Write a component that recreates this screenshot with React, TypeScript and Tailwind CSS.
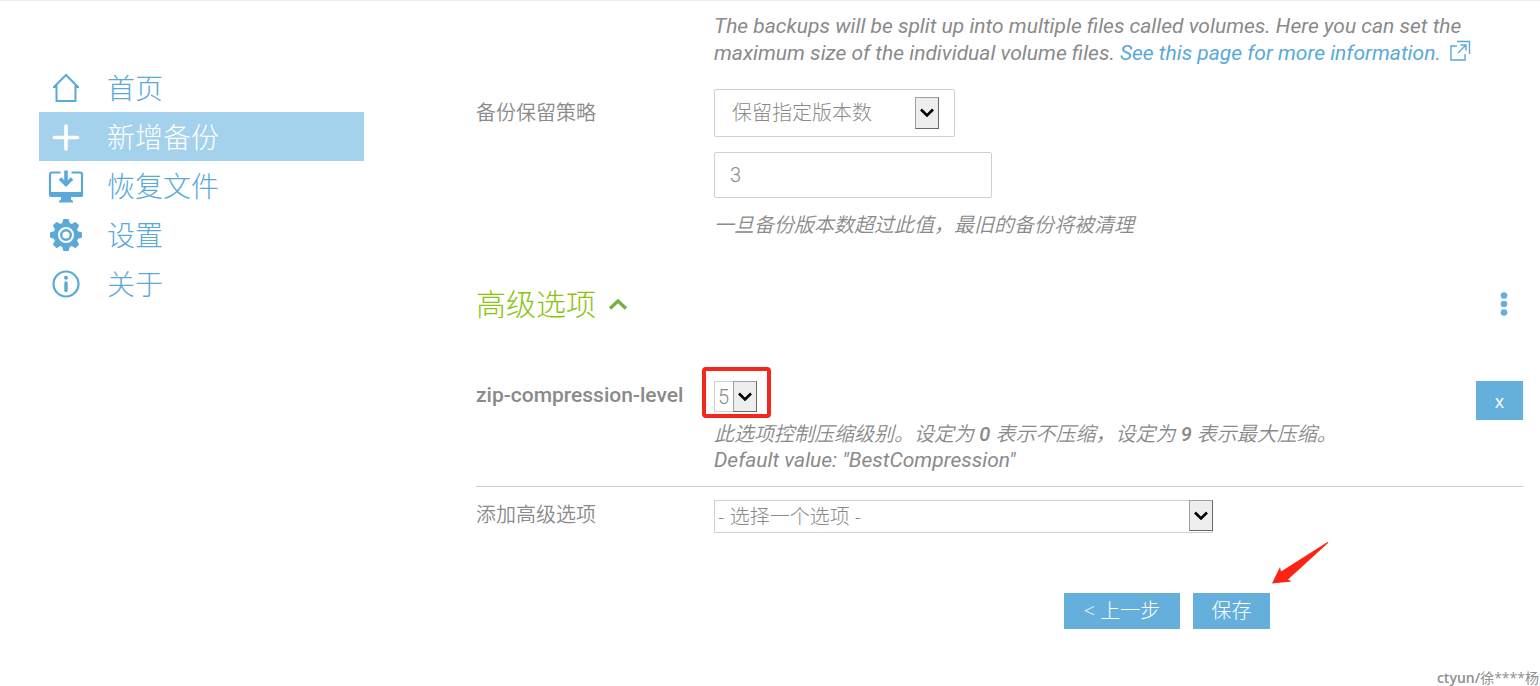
import { useState } from 'react'
import type { ReactNode, SelectHTMLAttributes } from 'react'
import clsx from 'clsx'

interface NavItem {
  label: string
  icon: ReactNode
}

const HomeIcon = () => (
  <svg viewBox="0 0 36 36" className="size-9" fill="none" stroke="currentColor" strokeWidth="2">
    <path d="M5.500 17.500 18 5l12.500 12.500" />
    <path d="M8.500 15v16h19V15" />
    <path d="M5 17h4M27 17h4" />
  </svg>
)

const PlusIcon = () => (
  <svg viewBox="0 0 36 36" className="size-9" fill="none" stroke="currentColor" strokeWidth="3.600" strokeLinecap="round">
    <path d="M18 7v23M6.500 18.500h23" />
  </svg>
)

const RestoreIcon = () => (
  <svg viewBox="0 0 36 36" className="size-9" fill="none" stroke="currentColor">
    <path strokeWidth="2.200" d="M12.500 4.500H4q-2 0-2 2v19.500h32V6.500q0-2-2-2h-8.500" />
    <path fill="currentColor" stroke="none" d="M1 24h34v3.500q0 1.500-1.500 1.500H23v2.500l2 1.500v1.500H11V33l2-1.500V29H2.500Q1 29 1 27.500z" />
    <path strokeWidth="3.600" d="M18 2.500v13" />
    <path strokeWidth="3.600" d="m12 10.500 6 6 6-6" />
  </svg>
)

const teeth = [0, 45, 90, 135, 180, 225, 270, 315]

const GearIcon = () => (
  <svg viewBox="0 0 36 36" className="size-9">
    <g fill="currentColor">
      {teeth.map(angle => (
        <path key={angle} d="m14 7 1.200-4.500q.2-.5.8-.5h4q.6 0 .8.500L22 7z" transform={`rotate(${angle} 18 18)`} />
      ))}
      <circle cx="18" cy="18" r="12.500" />
    </g>
    <circle cx="18" cy="18" r="7" fill="none" stroke="white" strokeWidth="2" />
    <circle cx="18" cy="18" r="3.600" fill="white" />
  </svg>
)

const InfoIcon = () => (
  <svg viewBox="0 0 36 36" className="size-9" fill="none" stroke="currentColor">
    <circle cx="18" cy="18" r="12.500" strokeWidth="2.200" />
    <path strokeWidth="3.400" strokeLinecap="round" d="M18 17v7.500" />
    <circle cx="18" cy="11.800" r="2" fill="currentColor" stroke="none" />
  </svg>
)

const navItems: NavItem[] = [
  { label: '首页', icon: <HomeIcon /> },
  { label: '新增备份', icon: <PlusIcon /> },
  { label: '恢复文件', icon: <RestoreIcon /> },
  { label: '设置', icon: <GearIcon /> },
  { label: '关于', icon: <InfoIcon /> },
]

interface SelectProps extends SelectHTMLAttributes<HTMLSelectElement> {
  wrapClass?: string
  arrowClass?: string
}

function Select({ wrapClass, arrowClass, className, children, ...rest }: SelectProps) {
  return (
    <div className={clsx('relative', wrapClass)}>
      <select
        {...rest}
        className={clsx('block w-full appearance-none border border-[#d0d0d0] bg-white font-light outline-none', className)}
      >
        {children}
      </select>
      <span
        className={clsx(
          'pointer-events-none absolute flex w-6 items-center justify-center border border-[#a0a0a0] border-r-[#696969] border-b-[#696969] bg-[#eeeeee]',
          arrowClass
        )}
      >
        <svg viewBox="0 0 14 10" className="h-[10px] w-[14px]" fill="none" stroke="black" strokeWidth="2.600">
          <path d="m1 1.500 6 6 6-6" />
        </svg>
      </span>
    </div>
  )
}

export default function App() {
  const [active, setActive] = useState('新增备份')
  const [retention, setRetention] = useState('versions')
  const [keep, setKeep] = useState('3')
  const [level, setLevel] = useState('5')
  const [showAdvanced, setShowAdvanced] = useState(true)

  return (
    <div className="relative flex min-h-screen items-start gap-28 border-t border-[#ececec] bg-white pr-[17px] pl-[39px] font-['Open_Sans','Noto_Sans_CJK_SC',sans-serif] text-xl leading-[26px] text-[#8a8a8a]">

      {/* Sidebar */}
      <nav className="w-[325px] shrink-0 pt-[62px]">
        {navItems.map(item => (
          <a
            key={item.label}
            href="#"
            onClick={() => setActive(item.label)}
            className={clsx(
              'flex h-[49px] items-center gap-[23px] pl-[9px] text-[28px] font-light',
              active === item.label ? 'bg-[#a4d1ec] text-white' : 'text-[#5aa9d8]'
            )}
          >
            {item.icon}
            <span>{item.label}</span>
          </a>
        ))}
      </nav>

      {/* Backup options */}
      <main className="min-w-0 flex-1 pt-3">
        <p className="pr-8 pl-[238px] font-['Roboto',sans-serif] text-[21px] leading-[27px] italic">
          The backups will be split up into multiple files called volumes. Here you can set the
          maximum size of the individual volume files.{' '}
          <a href="#" className="text-[#5aa9d8]">
            See this page for more information.
            <svg viewBox="0 0 22 22" className="ml-2 inline size-[22px] align-[-2px]" fill="none" stroke="currentColor" strokeWidth="1.400">
              <path d="M8 6H2v14h14v-6M8 1.500h12.500V14M9 13l8-8M11.500 5H17v5.500" />
            </svg>
          </a>
        </p>

        <div className="mt-[22px] flex items-start">
          <label htmlFor="retention" className="w-[238px] shrink-0 leading-[48px] font-[350]">备份保留策略</label>
          <div>
            <Select
              id="retention"
              value={retention}
              onChange={e => setRetention(e.target.value)}
              wrapClass="w-[241px]"
              className="h-12 rounded-xs px-[17px]"
              arrowClass="top-2 right-4 h-8"
            >
              <option value="versions">保留指定版本数</option>
              <option value="all">保留所有备份</option>
            </Select>
            <input
              aria-label="备份版本数"
              value={keep}
              onChange={e => setKeep(e.target.value)}
              className="mt-[15px] block h-[46px] w-[278px] rounded-xs border border-[#d0d0d0] px-[15px] font-['Roboto',sans-serif] font-light outline-none"
            />
            <p className="mt-[14px] font-[350] italic">一旦备份版本数超过此值，最旧的备份将被清理</p>
          </div>
        </div>

        <div className="mt-[46px] flex h-10 items-center justify-between">
          <h2>
            <button
              onClick={() => setShowAdvanced(!showAdvanced)}
              className="flex items-center gap-3 text-3xl font-light text-[#8ac40f]"
            >
              高级选项
              <svg
                viewBox="0 0 20 12"
                className={clsx('h-3 w-5', !showAdvanced && 'rotate-180')}
                fill="none"
                stroke="#76b043"
                strokeWidth="3.400"
              >
                <path d="m2 10.500 8-7.500 8 7.500" />
              </svg>
            </button>
          </h2>
          <button aria-label="菜单" className="mr-[15px] text-[#65afdc]">
            <svg viewBox="0 0 8 24" className="h-6 w-2" fill="currentColor">
              <circle cx="4" cy="3.500" r="3.300" />
              <circle cx="4" cy="12" r="3.300" />
              <circle cx="4" cy="20.500" r="3.300" />
            </svg>
          </button>
        </div>

        {showAdvanced && (
          <>
            <div className="mt-[57px] flex items-start border-b border-[#cccccc] pb-[13px]">
              <label htmlFor="level" className="w-[238px] shrink-0 font-['Roboto',sans-serif] text-[21px] leading-7 font-medium">zip-compression-level</label>
              <div className="min-w-0 flex-1">
                <div className="relative w-[43px]">
                  <Select
                    id="level"
                    value={level}
                    onChange={e => setLevel(e.target.value)}
                    className="h-[31px] pl-[3px] font-['Roboto',sans-serif]"
                    arrowClass="top-0 right-0 h-[31px]"
                  >
                    {['0', '1', '2', '3', '4', '5', '6', '7', '8', '9'].map(n => (
                      <option key={n}>{n}</option>
                    ))}
                  </Select>
                  <span className="pointer-events-none absolute -top-[14px] -right-[14px] -bottom-[6px] -left-3 rounded-sm border-4 border-[#f5261b]" />
                </div>
                <p className="mt-[9px] font-[350] italic">
                  此选项控制压缩级别。设定为 <span className="font-['Roboto',sans-serif] font-medium">0</span> 表示不压缩，设定为 <span className="font-['Roboto',sans-serif] font-medium">9</span> 表示最大压缩。
                </p>
                <p className="font-['Roboto',sans-serif] text-[21px] italic">Default value: "BestCompression"</p>
              </div>
              <button className="h-[39px] w-[47px] shrink-0 bg-[#65afdc] text-lg text-white">x</button>
            </div>

            <div className="mt-[13px] flex items-start">
              <label htmlFor="add-option" className="w-[238px] shrink-0 leading-[29px] font-[350]">添加高级选项</label>
              <Select
                id="add-option"
                wrapClass="w-[499px]"
                className="h-[33px] pl-[3px]"
                arrowClass="top-0 right-0 h-[31px]"
              >
                <option>- 选择一个选项 -</option>
              </Select>
            </div>
          </>
        )}

        {/* Step buttons, with the pointer above save */}
        <div className="mt-[60px] flex justify-end gap-[13px] pr-[253px] font-light text-white">
          <button className="h-9 w-[116px] bg-[#65afdc]">&lt; 上一步</button>
          <div className="relative">
            <button className="h-9 w-[77px] bg-[#65afdc]">保存</button>
            <svg viewBox="0 0 58 44" className="pointer-events-none absolute -top-[52px] left-[78px] h-[44px] w-[58px]" fill="#fb2314">
              <path d="M1 42.500 9 26l1 4.500L56.500 1q1.500-.5.5 1L17 38.500l3.500 2z" />
            </svg>
          </div>
        </div>
      </main>

      <span className="absolute right-[1px] bottom-0 text-sm leading-4 text-[#8f8f8f]">
        <span className="font-semibold">ctyun/</span>徐****杨
      </span>
    </div>
  )
}
